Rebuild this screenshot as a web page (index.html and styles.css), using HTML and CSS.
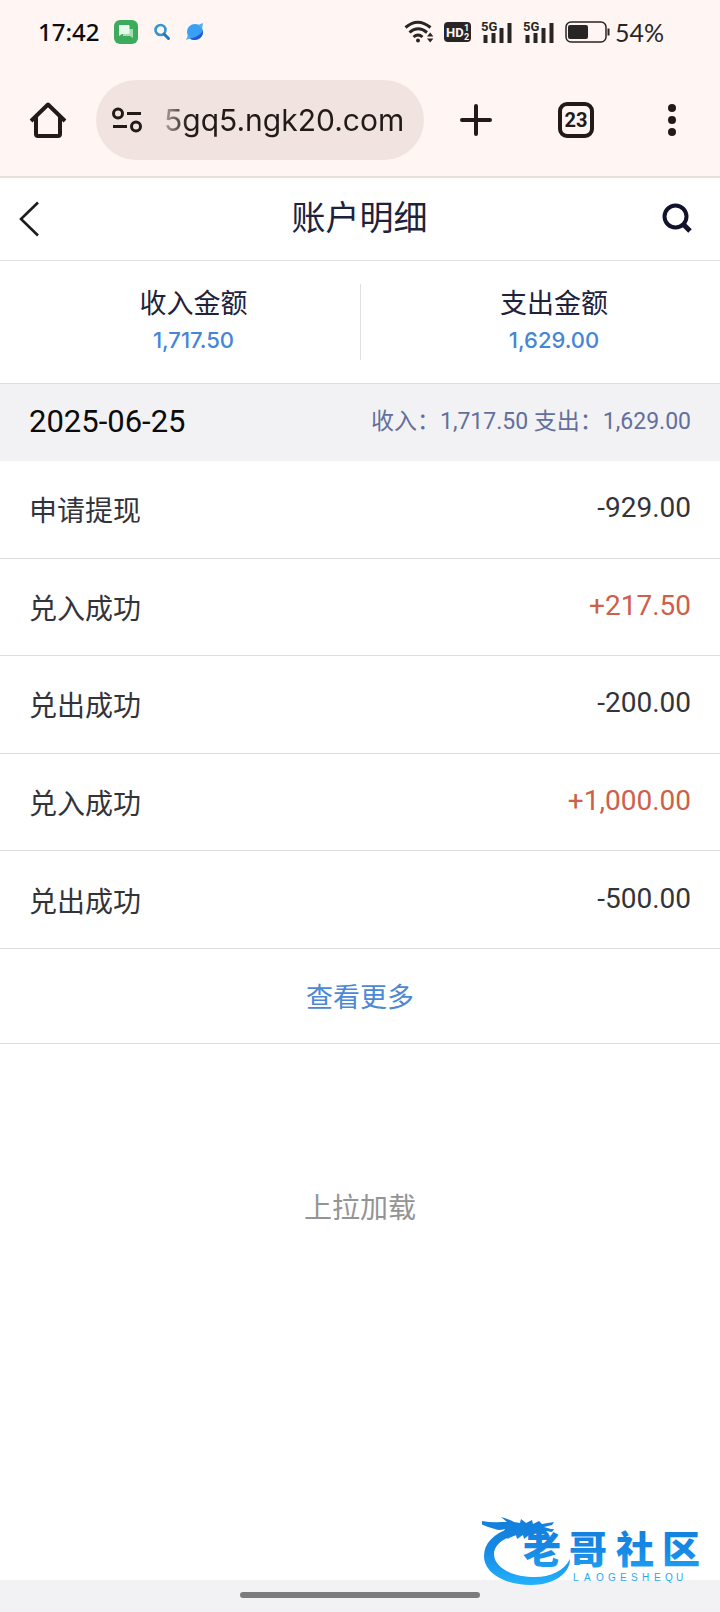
FILE: index.html
```html
<!DOCTYPE html>
<html lang="zh-CN">
<head>
<meta charset="utf-8">
<meta name="viewport" content="width=device-width, initial-scale=1">
<title>账户明细</title>
<link rel="stylesheet" href="styles.css">
</head>
<body>
<div class="status">
  <time class="clock">17:42</time>
  <svg class="app-icon" width="26" height="26" viewBox="0 0 26 26" aria-hidden="true">
    <rect x="1" y="1" width="24" height="24" rx="6" fill="#3cab5b"/>
    <path d="M14 10h6v9l-3-2h-7v-4h4z" fill="#a5dcb2"/>
    <path d="M6.500 6h9q1 0 1 1v7q0 1-1 1H9l-3 2V7q0-1 .5-1z" fill="#e9f8ec"/>
  </svg>
  <svg class="app-icon" width="18" height="18" viewBox="0 0 18 18" fill="none" aria-hidden="true">
    <circle cx="7.500" cy="7" r="5" stroke="#3395d2" stroke-width="2.600"/>
    <path d="M11 11l4.500 4.500" stroke="#2878b8" stroke-width="3" stroke-linecap="round"/>
  </svg>
  <svg class="app-icon" width="20" height="20" viewBox="0 0 20 20" aria-hidden="true">
    <circle cx="10" cy="10" r="8" fill="#3aa0f3"/>
    <path d="M18 8C16 13 9 17 4 16c4 4 15 2 14-8z" fill="#2456d6"/>
    <path d="M13 3l5-2-1 6zM3 13l-2 5 5-2z" fill="#4db0f5"/>
  </svg>
  <div class="signals">
    <svg width="30" height="24" viewBox="0 0 30 24" fill="none" stroke="#292525" stroke-width="3" aria-hidden="true">
      <path d="M1.500 7.500q12-10.500 25 0M5.500 12.500q8.500-7.500 17.500 0M9.500 17q4.500-4 9 0"/>
      <circle cx="14" cy="20.500" r="2" fill="#292525" stroke="none"/>
      <path d="M23 16.500l3.200-4 3.200 4zM23 18.500l3.200 4 3.200-4z" fill="#292525" stroke="none"/>
    </svg>
    <svg width="27" height="20" viewBox="0 0 27 20" aria-hidden="true">
      <rect width="27" height="20" rx="4" fill="#292525"/>
      <text x="2" y="15" class="hd">HD</text>
      <text x="20" y="9" class="hd-small">1</text>
      <text x="20" y="18" class="hd-small">2</text>
    </svg>
    <svg width="32" height="24" viewBox="0 0 32 24" fill="#292525" aria-hidden="true">
      <text x="0" y="11" class="net">5G</text>
      <path d="M2.500 15h4v8h-4zM10.500 13h4v10h-4zM18.500 8h4v15h-4zM26.500 3h4v20h-4z"/>
    </svg>
    <svg width="32" height="24" viewBox="0 0 32 24" fill="#292525" aria-hidden="true">
      <text x="0" y="11" class="net">5G</text>
      <path d="M2.500 15h4v8h-4zM10.500 13h4v10h-4zM18.500 8h4v15h-4zM26.500 3h4v20h-4z"/>
    </svg>
    <div class="battery">
      <svg width="45" height="22" viewBox="0 0 45 22" aria-hidden="true">
        <rect x="1" y="1" width="40" height="20" rx="5" fill="none" stroke="#292525" stroke-width="1.500"/>
        <rect x="3" y="4" width="20" height="14" rx="2" fill="#292525"/>
        <path d="M43.500 7.500v7" stroke="#292525" stroke-width="2"/>
      </svg>
      <span class="percent">54%</span>
    </div>
  </div>
</div>

<div class="browser">
  <button class="tool" aria-label="主页">
    <svg width="38" height="38" viewBox="0 0 38 38" fill="none" stroke="#211a18" stroke-width="4" stroke-linejoin="round">
      <path d="M2 20L19 3.500 36 20"/>
      <path d="M7 16v17q0 2 2 2h20q2 0 2-2V16"/>
    </svg>
  </button>
  <label class="address">
    <svg width="30" height="26" viewBox="0 0 30 26" fill="none" stroke="#211a18" stroke-width="3" aria-hidden="true">
      <circle cx="6" cy="6.500" r="4.500"/><circle cx="24" cy="19.500" r="4.500"/>
      <path d="M15 6.500h14M1 19.500h14"/>
    </svg>
    <input class="url" type="text" aria-label="网址" value="5gq5.ngk20.com">
  </label>
  <button class="tool add" aria-label="新建标签页">
    <svg width="32" height="32" viewBox="0 0 32 32" stroke="#211a18" stroke-width="4" stroke-linecap="round"><path d="M16 2v28M2 16h28"/></svg>
  </button>
  <button class="tool" aria-label="23 个标签页"><span class="tab-count">23</span></button>
  <button class="tool" aria-label="菜单">
    <svg width="8" height="32" viewBox="0 0 8 32" fill="#211a18"><circle cx="4" cy="4" r="4"/><circle cx="4" cy="16" r="4"/><circle cx="4" cy="28" r="4"/></svg>
  </button>
</div>

<header class="header">
  <button class="icon-button" aria-label="返回">
    <svg width="20" height="36" viewBox="0 0 20 36" fill="none" stroke="#1c1c1f" stroke-width="2.600"><path d="M19 1.500L2 18l17 16.500"/></svg>
  </button>
  <h1 class="title">账户明细</h1>
  <button class="icon-button search" aria-label="搜索">
    <svg width="30" height="30" viewBox="0 0 30 30" fill="none" stroke="#11132a"><circle cx="13.500" cy="13.500" r="11" stroke-width="4"/><path d="M21 21l7 7" stroke-width="5"/></svg>
  </button>
</header>

<main class="content">
  <section class="summary">
    <div class="summary-item"><span class="summary-label">收入金额</span><span class="summary-value">1,717.50</span></div>
    <div class="summary-item"><span class="summary-label">支出金额</span><span class="summary-value">1,629.00</span></div>
  </section>
  <section>
    <div class="day">
      <h2 class="date">2025-06-25</h2>
      <p class="totals">收入：1,717.50 支出：1,629.00</p>
    </div>
    <ul class="records">
      <li class="record"><span>申请提现</span><span class="amount">-929.00</span></li>
      <li class="record"><span>兑入成功</span><span class="amount income">+217.50</span></li>
      <li class="record"><span>兑出成功</span><span class="amount">-200.00</span></li>
      <li class="record"><span>兑入成功</span><span class="amount income">+1,000.00</span></li>
      <li class="record"><span>兑出成功</span><span class="amount">-500.00</span></li>
    </ul>
    <button class="more">查看更多</button>
  </section>
  <p class="load">上拉加载</p>
</main>

<footer class="gesture"><span class="handle"></span></footer>

<svg class="brand" width="224" height="72" viewBox="0 0 224 72" role="img" aria-label="老哥社区">
  <defs>
    <linearGradient id="blue" gradientUnits="userSpaceOnUse" x1="0" y1="4" x2="0" y2="68">
      <stop offset="0" stop-color="#127fdc"/><stop offset=".45" stop-color="#1688e4"/><stop offset="1" stop-color="#22b0fb"/>
    </linearGradient>
  </defs>
  <g fill="url(#blue)">
    <path d="M34 11C14 15 2 26 2 40c0 17 21 29 47 29 22 0 39-11 39-26-6 12-20 18-35 18-22 0-41-9-41-23 0-9 9-17 28-20z"/>
    <path d="M0 5q10 2 19 1l6 0-6-5q8 2 13 5l6 1 1-4 5 4 6-3 1 4 6-3 3 3 12-2-2 3-8 2 7 2 3 0-2 3-6-1 3 3-1 2-9-3-5 1 2 4-7-3-5 4-1-4-6 4-1-4-9 4 3-6-8 2 3-6q-6 2-10 0-8-2-14-5z"/>
    <text class="brand-name" x="41 87 134 180" y="47">老哥社区</text>
    <text class="brand-latin" x="91 102 114 126 138 149 160 172 183 194" y="65">LAOGESHEQU</text>
  </g>
</svg>
</body>
</html>
```

FILE: styles.css
```css
* { box-sizing: border-box; }

body {
  margin: 0;
  min-height: 100vh;
  display: flex;
  flex-direction: column;
  position: relative;
  background: #fff;
  color: #33343a;
  font-family: "Noto Sans CJK SC", sans-serif;
}

button {
  padding: 0;
  border: 0;
  background: none;
  font: inherit;
  color: inherit;
}

svg { display: block; flex: none; }
h1, h2, p, ul { margin: 0; padding: 0; font-weight: 400; }

.status {
  display: flex;
  align-items: center;
  height: 64px;
  padding: 0 56px 0 38px;
  background: #fff6f4;
}

.clock { font: 500 24px/32px "Noto Sans", sans-serif; color: #0c0a0a; }
.app-icon { margin-left: 14px; }
.signals { display: flex; align-items: center; gap: 10px; margin-left: auto; }
.battery { display: flex; align-items: center; gap: 5px; }
.percent { font: 25px/32px Lato, sans-serif; color: #292525; }
.hd { font: 700 13px Roboto, sans-serif; fill: #fff6f4; }
.hd-small { font: 700 9px Roboto, sans-serif; fill: #fff6f4; }
.net { font: 700 13px Roboto, sans-serif; }

.browser {
  display: flex;
  align-items: center;
  height: 114px;
  background: #fff6f4;
  border-bottom: 2px solid #eaded9;
}

.tool { display: grid; place-items: center; height: 80px; flex: 0 1 96px; }
.add { flex-basis: 104px; }

.address {
  flex: 1;
  min-width: 0;
  display: flex;
  align-items: center;
  gap: 22px;
  height: 80px;
  padding: 0 12px 0 16px;
  border-radius: 40px;
  background: #f1e3e0;
}

.url {
  flex: 1;
  min-width: 0;
  padding: 0;
  border: 0;
  outline: 0;
  background: none;
  color: #211a18;
  font: 30px/44px Inter, sans-serif;
  -webkit-mask-image: linear-gradient(90deg, rgba(0, 0, 0, .3), #000 24px);
  mask-image: linear-gradient(90deg, rgba(0, 0, 0, .3), #000 24px);
}

.tab-count {
  display: grid;
  place-items: center;
  width: 36px;
  height: 36px;
  border: 4px solid #211a18;
  border-radius: 9px;
  font: 700 20px/24px Roboto, sans-serif;
  color: #211a18;
}

.header {
  display: flex;
  align-items: center;
  height: 83px;
  padding: 0 28px 0 19px;
  border-bottom: 1px solid #e0e0e2;
}

.icon-button { display: flex; width: 48px; }
.search { width: 40px; justify-content: flex-end; padding-bottom: 2px; }
.title { flex: 1; padding-bottom: 6px; text-align: center; font-size: 34px; line-height: 48px; color: #20223c; }

.content { flex: 1; }

.summary {
  display: grid;
  grid-template-columns: 1fr 1fr;
  padding: 23px 0;
  border-bottom: 1px solid #dedee0;
}

.summary-item { display: flex; flex-direction: column; align-items: center; padding-left: 27px; }
.summary-item + .summary-item { border-left: 1px solid #e0e0e2; }
.summary-label { font-size: 27px; line-height: 36px; color: #20223c; }
.summary-value { font: 500 22px/40px Inter, sans-serif; color: #4586d8; }

.day {
  display: flex;
  align-items: center;
  justify-content: space-between;
  height: 77px;
  padding: 0 29px 2px;
  background: #f2f2f4;
}

.date { font: 31px/40px Roboto, sans-serif; color: #0b0b0c; }
.totals { font: 23px/36px Roboto, "Noto Sans CJK SC", sans-serif; color: #636f9c; }

.records { display: grid; grid-auto-rows: 1fr; min-height: 488px; list-style: none; }

.record {
  display: flex;
  align-items: center;
  justify-content: space-between;
  padding: 0 29px;
  border-bottom: 1px solid #dedee0;
  font-size: 28px;
  line-height: 40px;
}

.amount { font-family: Roboto, sans-serif; padding-bottom: 2px; }
.income { color: #cd6049; }

.more {
  display: block;
  width: 100%;
  height: 95px;
  border-bottom: 1px solid #dedee0;
  font-size: 27px;
  line-height: 40px;
  color: #4d88d6;
}

.load { padding-top: 142px; text-align: center; font-size: 28px; line-height: 40px; color: #949494; }

.gesture { display: grid; place-items: center; height: 32px; padding-bottom: 2px; background: #f2f2f4; }
.handle { width: 33.3333%; height: 6px; border-radius: 3px; background: #7b7b7d; }

.brand { position: absolute; right: 14px; bottom: 24px; }
.brand-name { font: 900 38px "Noto Sans CJK SC", sans-serif; }
.brand-latin { font: 400 10px "Liberation Sans", sans-serif; }
```
